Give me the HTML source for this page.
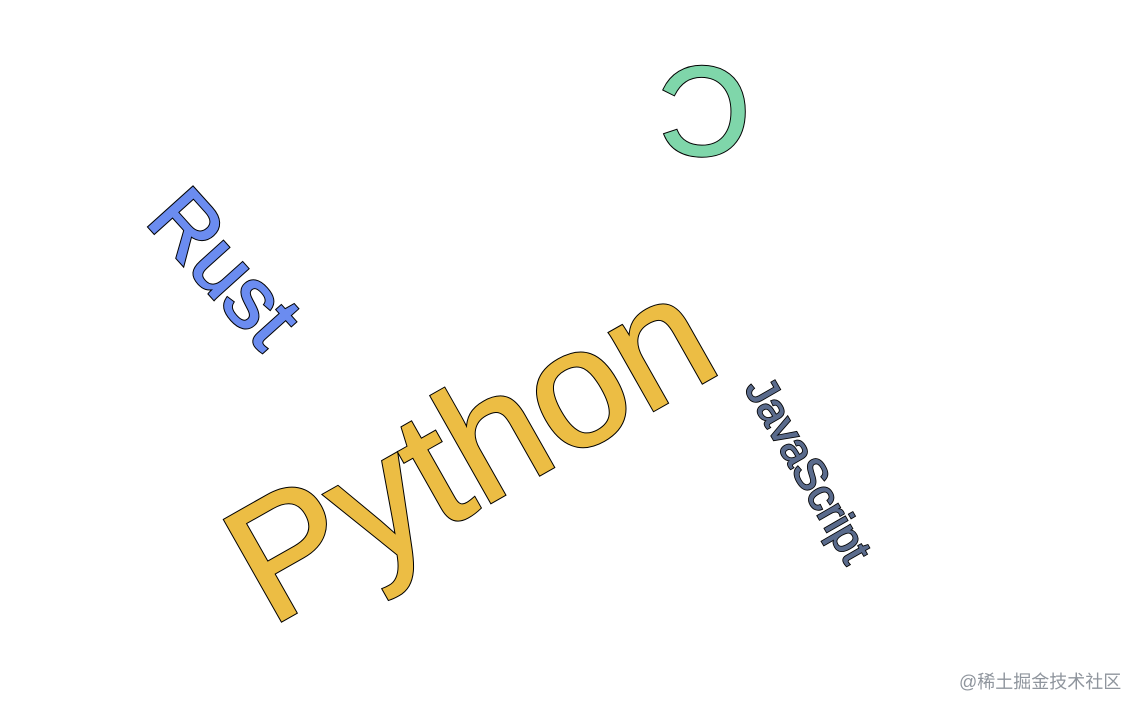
<!DOCTYPE html>
<html><head><meta charset="utf-8"><style>
html,body{margin:0;padding:0;background:#fff;width:1140px;height:710px;overflow:hidden}
svg text{font-family:"Liberation Sans",Arial,sans-serif;stroke-linejoin:miter}
.o{stroke:#000;fill:#000}
.wm{position:absolute;left:959px;top:668px;font:18px "Liberation Sans","Noto Sans CJK SC",sans-serif;color:#8f959d}
</style></head><body>
<svg width="1140" height="710" style="position:absolute;left:0;top:0">
<g text-anchor="middle" dominant-baseline="central">
<g transform="translate(469,448) rotate(-29.5)" font-size="168">
<text class="o" stroke-width="3.6">Python</text>
<text fill="#ecbd44" stroke="#ecbd44" stroke-width="1.6">Python</text>
</g>
<g transform="translate(705,111) rotate(180)" font-size="126">
<text class="o" stroke-width="3.4">C</text>
<text fill="#7fd6aa" stroke="#7fd6aa" stroke-width="1.4">C</text>
</g>
<g transform="translate(225,268) rotate(48)" font-size="86">
<text class="o" stroke-width="3.2">Rust</text>
<text fill="#6b8cf0" stroke="#6b8cf0" stroke-width="1.2">Rust</text>
</g>
<g transform="translate(808,470) rotate(60)" font-size="44">
<text class="o" stroke-width="2.4">JavaScript</text>
<text fill="#5a6b8c" stroke="#5a6b8c" stroke-width="0.7">JavaScript</text>
</g>
</g>
</svg>
<div class="wm">@稀土掘金技术社区</div>
</body></html>
